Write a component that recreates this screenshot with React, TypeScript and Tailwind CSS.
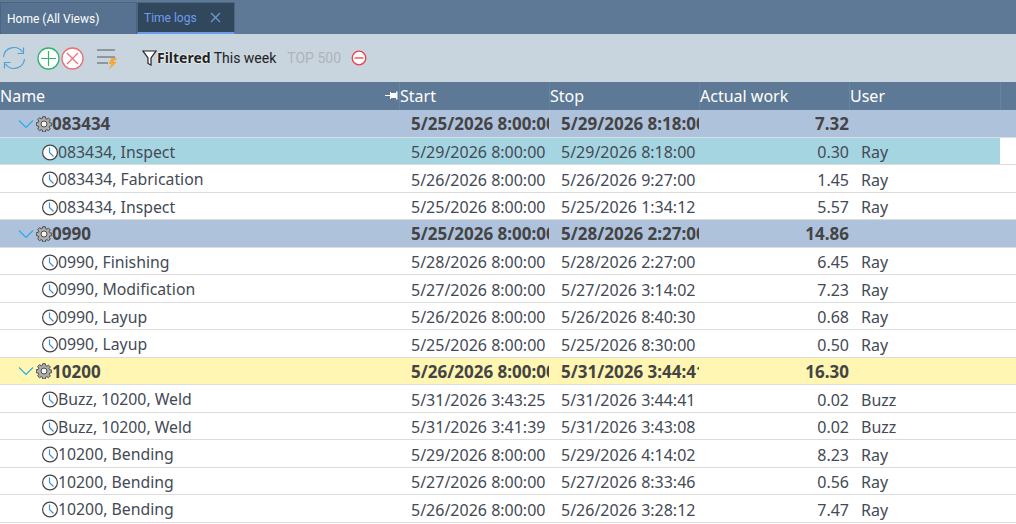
import React from "react";

type Row =
  | { kind: "group"; name: string; start: string; stop: string; work: string; yellow?: boolean }
  | { kind: "item"; name: string; start: string; stop: string; work: string; user: string; selected?: boolean };

const rows: Row[] = [
  { kind: "group", name: "083434", start: "5/25/2026 8:00:00", stop: "5/29/2026 8:18:00", work: "7.32" },
  { kind: "item", name: "083434, Inspect", start: "5/29/2026 8:00:00", stop: "5/29/2026 8:18:00", work: "0.30", user: "Ray", selected: true },
  { kind: "item", name: "083434, Fabrication", start: "5/26/2026 8:00:00", stop: "5/26/2026 9:27:00", work: "1.45", user: "Ray" },
  { kind: "item", name: "083434, Inspect", start: "5/25/2026 8:00:00", stop: "5/25/2026 1:34:12", work: "5.57", user: "Ray" },
  { kind: "group", name: "0990", start: "5/25/2026 8:00:00", stop: "5/28/2026 2:27:00", work: "14.86" },
  { kind: "item", name: "0990, Finishing", start: "5/28/2026 8:00:00", stop: "5/28/2026 2:27:00", work: "6.45", user: "Ray" },
  { kind: "item", name: "0990, Modification", start: "5/27/2026 8:00:00", stop: "5/27/2026 3:14:02", work: "7.23", user: "Ray" },
  { kind: "item", name: "0990, Layup", start: "5/26/2026 8:00:00", stop: "5/26/2026 8:40:30", work: "0.68", user: "Ray" },
  { kind: "item", name: "0990, Layup", start: "5/25/2026 8:00:00", stop: "5/25/2026 8:30:00", work: "0.50", user: "Ray" },
  { kind: "group", name: "10200", start: "5/26/2026 8:00:00", stop: "5/31/2026 3:44:41", work: "16.30", yellow: true },
  { kind: "item", name: "Buzz, 10200, Weld", start: "5/31/2026 3:43:25", stop: "5/31/2026 3:44:41", work: "0.02", user: "Buzz" },
  { kind: "item", name: "Buzz, 10200, Weld", start: "5/31/2026 3:41:39", stop: "5/31/2026 3:43:08", work: "0.02", user: "Buzz" },
  { kind: "item", name: "10200, Bending", start: "5/29/2026 8:00:00", stop: "5/29/2026 4:14:02", work: "8.23", user: "Ray" },
  { kind: "item", name: "10200, Bending", start: "5/27/2026 8:00:00", stop: "5/27/2026 8:33:46", work: "0.56", user: "Ray" },
  { kind: "item", name: "10200, Bending", start: "5/26/2026 8:00:00", stop: "5/26/2026 3:28:12", work: "7.47", user: "Ray" },
];

function Gear() {
  return (
    <svg width="16" height="16" viewBox="0 0 16 16" fill="none" className="shrink-0">
      <path
        d="M6.700.7h2.600l.4 2 1.100.5 1.700-1.100 1.800 1.800-1.100 1.700.5 1.100 2 .4v2.600l-2 .4-.5 1.100 1.100 1.700-1.800 1.800-1.700-1.100-1.100.5-.4 2H6.700l-.4-2-1.100-.5-1.700 1.100-1.800-1.800 1.100-1.700-.5-1.100-2-.4V6.700l2-.4.5-1.100-1.100-1.700 1.800-1.800 1.700 1.100 1.100-.5z"
        fill="#adadad"
        stroke="#4a4a4a"
        strokeWidth="1"
        strokeLinejoin="round"
      />
      <circle cx="8" cy="8" r="3" fill="#f4f4f4" stroke="#4a4a4a" strokeWidth="1" />
    </svg>
  );
}

function Clock() {
  return (
    <svg width="16" height="17" viewBox="0 0 16 17" fill="none" className="shrink-0">
      <circle cx="8" cy="8.500" r="7.400" fill="#fff" stroke="#454545" strokeWidth="1.200" />
      <path d="M7.500 3.500v5l4 4" stroke="#3f8fdc" strokeWidth="1.200" />
    </svg>
  );
}

function Chevron() {
  return (
    <svg width="16" height="10" viewBox="0 0 16 10" fill="none" stroke="#2aa9e6" strokeWidth="1.100" className="shrink-0">
      <path d="M1 1.500l7 7 7-7" />
    </svg>
  );
}

function DataRow({ row }: { row: Row }) {
  if (row.kind === "group") {
    return (
      <div
        className={
          "grid h-[27.5px] grid-cols-[399px_150px_150px_150px_167px] border-b border-[#d9dde6] pt-[1px] text-[17px] font-bold text-[#444444] " +
          (row.yellow ? "bg-[#fff6b3]" : "bg-[#afc2dc]")
        }
      >
        <div className="flex items-center pl-[18px]">
          <Chevron />
          <span className="ml-[2px]"><Gear /></span>
          <span>{row.name}</span>
        </div>
        <div className="flex items-center overflow-hidden whitespace-nowrap pl-[12px]">{row.start}</div>
        <div className="flex items-center overflow-hidden whitespace-nowrap pl-[12px]">{row.stop}</div>
        <div className="flex items-center justify-end">{row.work}</div>
        <div />
      </div>
    );
  }
  const sel = row.selected ? "bg-[#a6d5e2]" : "";
  return (
    <div className="grid h-[27.5px] grid-cols-[399px_150px_150px_150px_151px_16px] border-b border-[#dcdcdc] bg-white text-[16px] text-[#444a55]">
      <div className={"flex items-center pl-[42px] pt-[3px] text-[15.800px] " + sel}>
        <Clock />
        <span className="mt-[1px] whitespace-nowrap">{row.name}</span>
      </div>
      <div className={"flex items-center whitespace-nowrap pl-[12px] pt-[3px] " + sel}>{row.start}</div>
      <div className={"flex items-center whitespace-nowrap pl-[12px] pt-[3px] " + sel}>{row.stop}</div>
      <div className={"flex items-center justify-end pt-[3px] " + sel}>{row.work}</div>
      <div className={"flex items-center pl-[12px] pt-[3px] " + sel}>{row.user}</div>
      <div />
    </div>
  );
}

export default function App() {
  return (
    <div className="h-[524px] w-[1016px] overflow-hidden bg-white font-['Noto_Sans','Open_Sans',sans-serif] leading-none">
      {/* Tabs */}
      <div className="flex h-[34px] items-end bg-[#5d7996] font-['Roboto',sans-serif] text-[12px] text-white">
        <div className="flex h-[32px] w-[137px] items-center border border-[#4b6680] border-b-0 bg-[#567290] pl-[6px]">Home (All Views)</div>
        <div className="flex h-[32px] w-[98px] items-center justify-between border border-[#4b6680] border-b-2 border-b-[#6d9bea] bg-[#31475c] pl-[6px] pr-[13px] text-[#6f9df0]">
          <span>Time logs</span>
          <svg width="11" height="11" viewBox="0 0 11 11" stroke="#6f9dd0" strokeWidth="1.200"><path d="M1 1l9 9M10 1l-9 9" /></svg>
        </div>
      </div>

      {/* Toolbar */}
      <div className="flex h-[48px] items-center bg-[#c8d4de] pl-[2px] font-['Roboto',sans-serif] text-[14px]">
        <svg width="24" height="24" viewBox="0 0 24 24" fill="none" stroke="#4f9fd6" strokeWidth="1.200" className="shrink-0">
          <path d="M1.500 11A10.500 10.500 0 0 1 20.500 6" />
          <path d="M21.500 1.500v6h-6" />
          <path d="M22.500 13A10.500 10.500 0 0 1 3.500 18" />
          <path d="M2.500 22.500v-6h6" />
        </svg>
        <svg width="23" height="23" viewBox="0 0 23 23" fill="none" className="ml-[11px] shrink-0">
          <circle cx="11.500" cy="11.500" r="10.500" fill="#fff" stroke="#35b36a" strokeWidth="1.300" />
          <path d="M11.500 4v15M4 11.500h15" stroke="#35b36a" strokeWidth="1.200" />
        </svg>
        <svg width="23" height="23" viewBox="0 0 23 23" fill="none" className="ml-[1px] shrink-0">
          <circle cx="11.500" cy="11.500" r="10.500" fill="#fff" stroke="#ea6f75" strokeWidth="1.300" />
          <path d="M6 6l11 11M17 6L6 17" stroke="#ea6f75" strokeWidth="1.200" />
        </svg>
        <svg width="22" height="24" viewBox="0 0 22 24" fill="none" className="ml-[12px] shrink-0">
          <path d="M1 4h18M1 11h18M1 17h11" stroke="#7d8287" strokeWidth="1.300" />
          <path d="M21.500 12h-6l-3 6h3l-3 6 8.500-8h-3.500z" fill="#f0a93c" />
        </svg>
        <svg width="15" height="18" viewBox="0 0 15 18" fill="none" stroke="#222" strokeWidth="1.200" className="ml-[24px] shrink-0">
          <path d="M1 2h13L9 9v7l-3-1.500V9z" fill="#fff" />
        </svg>
        <span className="font-['Noto_Sans',sans-serif] text-[14px] font-bold text-[#222] [text-shadow:0_0_2px_#fff,0_0_2px_#fff]">Filtered</span>
        <span className="ml-[3px] text-[#222]">This week</span>
        <span className="ml-[11px] text-[#adb4ba]">TOP 500</span>
        <svg width="16" height="16" viewBox="0 0 16 16" fill="none" className="ml-[10px] shrink-0">
          <circle cx="8" cy="8" r="6.800" fill="#fff" stroke="#ec4048" strokeWidth="1.300" />
          <path d="M3.500 8h9" stroke="#ec4048" strokeWidth="1.300" />
        </svg>
      </div>

      {/* Header */}
      <div className="grid h-[28px] grid-cols-[399px_150px_150px_150px_151px_16px] bg-[#5d7996] text-[16px] text-white">
        <div className="relative flex items-center">
          <span>Name</span>
          <svg width="13" height="11" viewBox="0 0 13 11" fill="#fff" className="absolute left-[385px] top-[8px]">
            <path d="M0 5h5v1H0zM5 2h1v7H5zM6 3h5v5H6zM11 1.500h1.500v8H11z" />
          </svg>
        </div>
        <div className="flex items-center border-l border-[#66839f]">Start</div>
        <div className="flex items-center border-l border-[#66839f]">Stop</div>
        <div className="flex items-center border-l border-[#66839f]">Actual work</div>
        <div className="flex items-center border-l border-[#66839f]">User</div>
        <div className="border-l border-[#66839f]" />
      </div>

      {rows.map((r, i) => (
        <DataRow key={i} row={r} />
      ))}
    </div>
  );
}
